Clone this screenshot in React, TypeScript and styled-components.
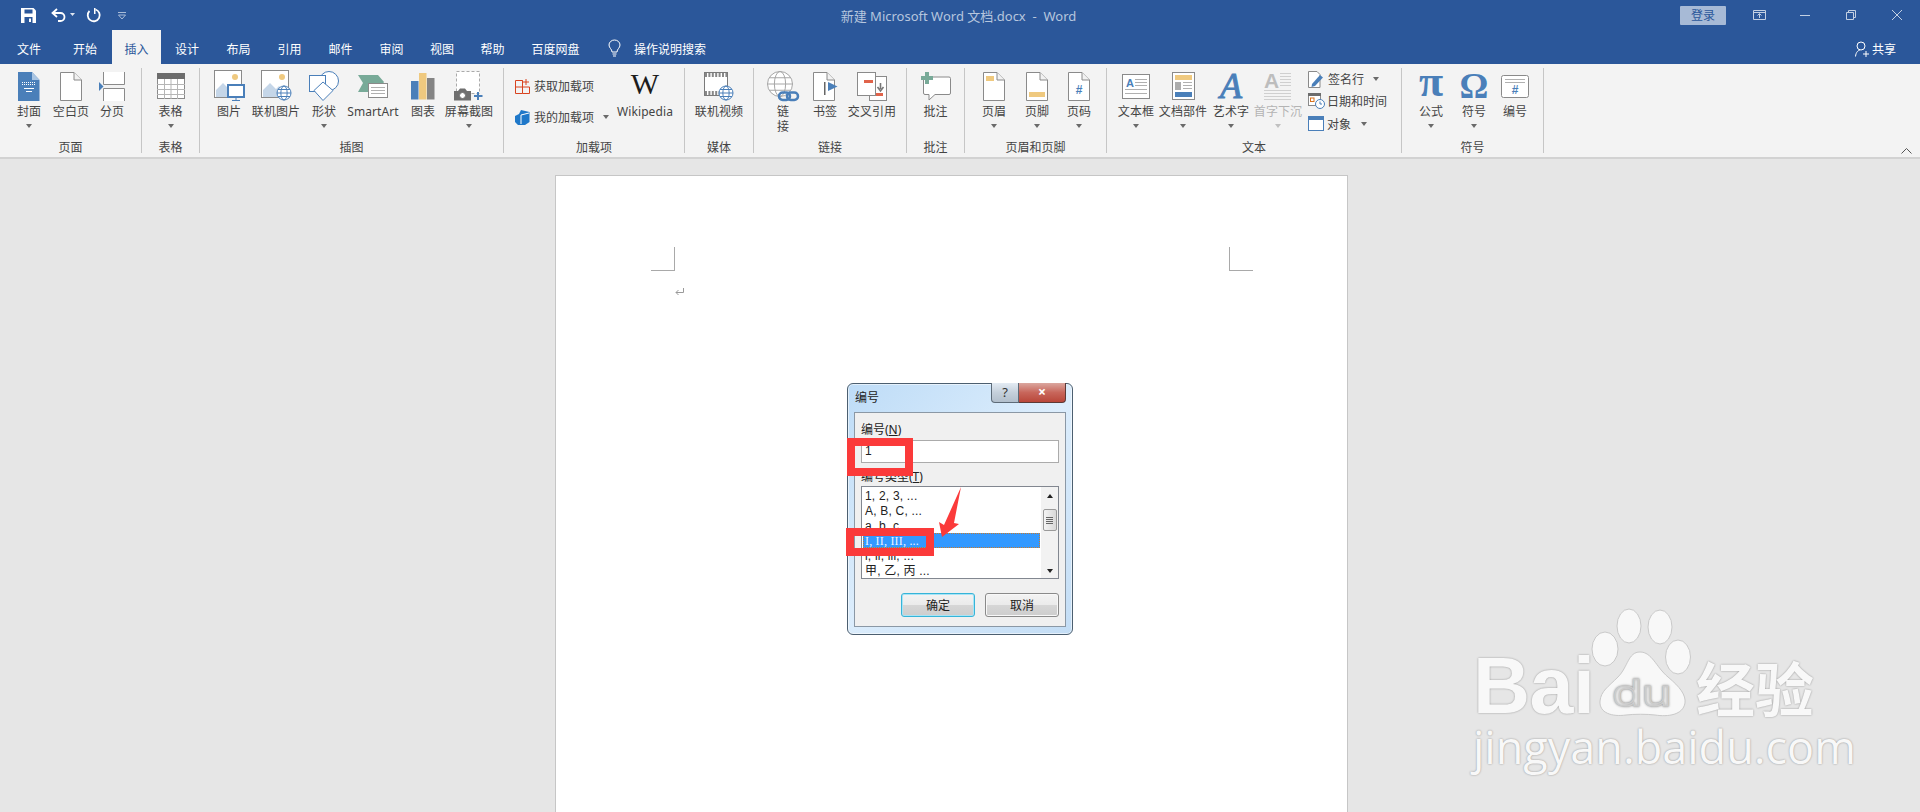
import React from 'react';
import styled, { createGlobalStyle } from 'styled-components';

const GlobalStyle = createGlobalStyle`
  html, body { margin: 0; padding: 0; background: #e6e6e6; }
  body { font-family: "Noto Sans", "Noto Sans CJK SC", sans-serif; font-size: 12px; color: #444; }
  * { box-sizing: border-box; }
  svg { overflow: visible; flex: none; }
`;

const Shell = styled.div`
  position: relative;
  width: 1920px;
  height: 812px;
  overflow: hidden;
  display: flex;
  flex-direction: column;
`;

/* title bar */
const Header = styled.header`
  background: #2b579a;
  height: 64px;
  flex: none;
  color: #fff;
`;
const TitleRow = styled.div`
  height: 30px;
  display: grid;
  grid-template-columns: 1fr auto 1fr;
  align-items: center;
`;
const Qat = styled.div`
  display: flex;
  align-items: center;
  padding-left: 21px;
`;
const QatIcon = styled.span<{ $w: number }>`
  display: flex;
  align-items: center;
  width: ${(p) => p.$w}px;
`;
const DocTitle = styled.div`
  color: #b6c6de;
  font-size: 13px;
  white-space: pre;
  padding-right: 3px;
`;
const WinControls = styled.div`
  display: flex;
  justify-content: flex-end;
  align-items: center;
`;
const Login = styled.div`
  width: 46px;
  height: 19px;
  margin-right: 10px;
  background: #a7bad6;
  border-radius: 1px;
  color: #2b579a;
  text-align: center;
  line-height: 19px;
`;
const WinButton = styled.span`
  width: 46px;
  height: 30px;
  display: flex;
  align-items: center;
  justify-content: center;
`;
const TabRow = styled.nav`
  height: 34px;
  display: flex;
  align-items: stretch;
`;
const Tab = styled.div<{ $w: number; $active?: boolean }>`
  width: ${(p) => p.$w}px;
  display: flex;
  align-items: center;
  justify-content: center;
  padding-top: 3px;
  background: ${(p) => (p.$active ? '#f3f3f3' : 'transparent')};
  color: ${(p) => (p.$active ? '#2b579a' : '#fff')};
`;
const Search = styled.div`
  display: flex;
  align-items: center;
  gap: 13px;
  margin-left: 15px;
  padding-top: 3px;
`;
const Share = styled.div`
  margin-left: auto;
  margin-right: 24px;
  display: flex;
  align-items: center;
  gap: 3px;
  padding-top: 3px;
`;

/* ribbon */
const Ribbon = styled.section`
  position: relative;
  height: 95px;
  flex: none;
  display: flex;
  padding-top: 4px;
  background: #f3f3f3;
  border-bottom: 2px solid #d2d2d2;
`;
const Group = styled.div<{ $w: number }>`
  width: ${(p) => p.$w}px;
  height: 85px;
  display: flex;
  flex-direction: column;
  border-right: 1px solid #c6c6c6;
`;
const GroupBody = styled.div<{ $pad?: number }>`
  flex: 1;
  display: flex;
  padding-left: ${(p) => p.$pad ?? 0}px;
`;
const GroupLabel = styled.div`
  height: 15px;
  line-height: 15px;
  margin-bottom: -2px;
  text-align: center;
  color: #444;
`;
const Tool = styled.div<{ $w: number; $off?: boolean }>`
  width: ${(p) => p.$w}px;
  display: flex;
  flex-direction: column;
  align-items: center;
  padding-top: 2px;
  color: ${(p) => (p.$off ? '#b4b4b4' : '#444')};
`;
const ToolIcon = styled.div`
  height: 32px;
  display: flex;
  align-items: center;
  justify-content: center;
`;
const ToolText = styled.div`
  line-height: 15px;
  margin-top: 2px;
  text-align: center;
  white-space: nowrap;
  letter-spacing: 0.1px;
`;
const Caret = styled.i<{ $light?: boolean }>`
  display: block;
  width: 0;
  height: 0;
  margin-top: 5px;
  border-left: 3.5px solid transparent;
  border-right: 3.5px solid transparent;
  border-top: 4px solid ${(p) => (p.$light ? '#c0c0c0' : '#6a6a6a')};
`;
const SmallCol = styled.div<{ $w: number; $top?: number }>`
  width: ${(p) => p.$w}px;
  padding-top: ${(p) => p.$top ?? 0}px;
  display: flex;
  flex-direction: column;
`;
const SmallRow = styled.div<{ $h: number; $gap: number; $indent: number }>`
  height: ${(p) => p.$h}px;
  display: flex;
  align-items: center;
  gap: ${(p) => p.$gap}px;
  padding-left: ${(p) => p.$indent}px;
  white-space: nowrap;
`;
const RowCaret = styled(Caret)<{ $ml: number }>`
  margin-top: 0;
  margin-left: ${(p) => p.$ml}px;
`;
const Collapse = styled.svg`
  position: absolute;
  right: 8px;
  bottom: 3px;
`;
const WikiW = styled.span`
  font-family: "Liberation Serif", serif;
  font-size: 30px;
  line-height: 26px;
  margin-bottom: 4px;
  color: #1c1c1c;
`;

/* document area */
const Workspace = styled.main`
  flex: 1;
  display: flex;
  justify-content: center;
  padding: 16px 18px 0 0;
  background: #e6e6e6;
`;
const Page = styled.div`
  width: 793px;
  background: #fff;
  border: 1px solid #c6c6c6;
  border-bottom: 0;
  padding: 71px 94px 0 95px;
`;
const CropRow = styled.div`
  display: flex;
  justify-content: space-between;
`;
const CropMark = styled.div<{ $side: 'left' | 'right' }>`
  width: 24px;
  height: 24px;
  border-bottom: 1px solid #a9a9a9;
  ${(p) => (p.$side === 'left' ? 'border-right' : 'border-left')}: 1px solid #a9a9a9;
`;
const ReturnMark = styled.svg`
  display: block;
  margin: 17px 0 0 24px;
`;

/* dialog */
const Dialog = styled.div`
  position: absolute;
  left: 847px;
  top: 383px;
  width: 226px;
  height: 252px;
  display: flex;
  flex-direction: column;
  border: 1px solid #4c5f70;
  border-radius: 6px;
  background: linear-gradient(135deg, #bedcf7 0%, #dcedfc 50%, #c3ddf5 100%);
  box-shadow: inset 0 0 0 1px rgba(255, 255, 255, 0.55);
`;
const DialogHead = styled.div`
  height: 28px;
  flex: none;
  display: flex;
  justify-content: space-between;
  padding: 0 6px 0 7px;
  color: #222;
`;
const DialogTitle = styled.div`
  padding-top: 6px;
  line-height: 16px;
`;
const CaptionGroup = styled.div`
  display: flex;
  height: 20px;
  margin-top: -1px;
`;
const HelpBtn = styled.div`
  width: 28px;
  text-align: center;
  font-size: 13px;
  line-height: 19px;
  color: #333;
  border: 1px solid #5d6b78;
  border-top: 0;
  border-radius: 0 0 0 4px;
  background: linear-gradient(180deg, #e3ebf3 0%, #c5d0db 50%, #b2bfcc 100%);
`;
const CloseBtn = styled.div`
  width: 47px;
  text-align: center;
  font-size: 14px;
  font-weight: 700;
  line-height: 18px;
  color: #fff;
  border: 1px solid #5d3a36;
  border-left: 0;
  border-top: 0;
  border-radius: 0 0 4px 0;
  background: linear-gradient(180deg, #dba79f 0%, #c8665b 50%, #b9473a 100%);
`;
const DialogPanel = styled.div`
  flex: 1;
  margin: 0 6px 7px;
  padding: 8px 6px 0;
  background: #f0f0f0;
  border: 1px solid #8b98a5;
  color: #222;
`;
const FieldLabel = styled.div`
  height: 16px;
  line-height: 18px;
`;
const Under = styled.span`
  text-decoration: underline;
`;
const ValueInput = styled.div`
  height: 23px;
  margin: 3px 0 5px;
  padding: 0 3px;
  line-height: 21px;
  background: #fff;
  border: 1px solid #ababab;
  font-family: "Liberation Sans", sans-serif;
  color: #222;
`;
const ListBox = styled.div`
  height: 93px;
  margin-top: 2px;
  display: flex;
  justify-content: space-between;
  background: #fff;
  border: 1px solid #828790;
`;
const ListItems = styled.div`
  width: 178px;
  padding: 1px 0 0 1px;
`;
const ListItem = styled.div<{ $sel?: boolean }>`
  height: 15px;
  line-height: 16px;
  padding-left: 2px;
  font-family: ${(p) => (p.$sel ? '"Liberation Serif", serif' : '"Liberation Sans", "Noto Sans CJK SC", sans-serif')};
  letter-spacing: 0.2px;
  color: ${(p) => (p.$sel ? '#eaf4ff' : '#222')};
  background: ${(p) => (p.$sel ? '#3399ff' : 'transparent')};
  outline: ${(p) => (p.$sel ? '1px dotted #c77b2f' : 'none')};
  outline-offset: -1px;
`;
const ScrollTrack = styled.div`
  width: 17px;
  display: flex;
  flex-direction: column;
  align-items: center;
  background: #f2f2f2;
`;
const ScrollThumb = styled.div`
  width: 14px;
  height: 22px;
  margin: 6px 0 auto;
  display: flex;
  flex-direction: column;
  justify-content: center;
  gap: 1px;
  align-items: center;
  border: 1px solid #9a9a9a;
  border-radius: 2px;
  background: linear-gradient(90deg, #f4f4f4, #d8d8d8);
`;
const ThumbLine = styled.i`
  display: block;
  width: 7px;
  height: 1px;
  background: #666;
`;
const ScrollArrow = styled.i<{ $up?: boolean }>`
  display: block;
  width: 0;
  height: 0;
  margin: 7px 0 5px;
  border-left: 3.5px solid transparent;
  border-right: 3.5px solid transparent;
  ${(p) => (p.$up ? 'border-bottom' : 'border-top')}: 4px solid #222;
`;
const DialogActions = styled.div`
  display: flex;
  justify-content: flex-end;
  gap: 10px;
  margin-top: 14px;
`;
const DialogButton = styled.div<{ $primary?: boolean }>`
  width: 74px;
  height: 24px;
  border-radius: 3px;
  text-align: center;
  line-height: 23px;
  font-size: 12px;
  color: #222;
  border: ${(p) => (p.$primary ? '1px solid #36b4d8' : '1px solid #8a8a8a')};
  box-shadow: ${(p) => (p.$primary ? 'inset 0 0 0 1px #a8e4f6' : 'inset 0 0 0 1px #f8f8f8')};
  background: linear-gradient(180deg, #f3f3f3 0%, #ebebeb 48%, #d6d6d6 52%, #cdcdcd 100%);
`;

/* annotations on top of the screenshot */
const RedBox = styled.div<{ $x: number; $y: number; $w: number; $h: number }>`
  position: absolute;
  left: ${(p) => p.$x}px;
  top: ${(p) => p.$y}px;
  width: ${(p) => p.$w}px;
  height: ${(p) => p.$h}px;
  border: 8px solid #fb3a3a;
`;
const RedArrow = styled.svg`
  position: absolute;
  left: 935px;
  top: 485px;
`;

/* watermark */
const Watermark = styled.div`
  position: absolute;
  left: 1473px;
  top: 605px;
  width: 350px;
  color: #f8f8f8;
  text-shadow: 0 0 2px rgba(0, 0, 0, 0.4);
`;
const MarkTop = styled.div`
  display: flex;
  align-items: flex-end;
  height: 115px;
`;
const MarkBai = styled.span`
  font-family: "Liberation Sans", sans-serif;
  font-weight: 700;
  font-size: 79px;
  line-height: 65px;
  width: 118px;
  margin-bottom: 2px;
  letter-spacing: -0.5px;
`;
const MarkCn = styled.span`
  font-family: "Noto Sans CJK SC", sans-serif;
  font-weight: 700;
  font-size: 59px;
  line-height: 59px;
  margin: 0 0 4px 1px;
  white-space: nowrap;
`;
const MarkUrl = styled.div`
  font-family: "Open Sans", sans-serif;
  font-weight: 400;
  font-size: 45px;
  line-height: 50px;
  margin-top: 2px;
  white-space: nowrap;
`;

/* icons */
const G = '#8a8a8a';
const BLUE = '#4a7fb9';
const YEL = '#efc97f';
const RED = '#e0634a';
const TEAL = '#78aa98';

const PAPER = 'M.5.5H14L21.5 8V28.5H.5Z';
const Sheet = ({ children }: { children?: React.ReactNode }) => (
  <svg width="22" height="29" viewBox="0 0 22 29">
    <path d={PAPER} fill="#fff" stroke={G} />
    <path d="M14 .5V8H21.5" fill="#f2f2f2" stroke={G} />
    {children}
  </svg>
);
const Globe = ({ x, y, r, c = BLUE }: { x: number; y: number; r: number; c?: string }) => (
  <g fill="#fff" stroke={c} strokeWidth="1">
    <circle cx={x} cy={y} r={r} />
    <ellipse cx={x} cy={y} rx={r * 0.45} ry={r} fill="none" />
    <path d={`M${x - r} ${y}H${x + r}M${x - r * 0.85} ${y - r * 0.5}H${x + r * 0.85}M${x - r * 0.85} ${y + r * 0.5}H${x + r * 0.85}`} fill="none" />
  </g>
);
const PhotoBase = () => (
  <>
    <rect x=".5" y=".5" width="27" height="27" fill="#fff" stroke={G} />
    <circle cx="21" cy="7" r="3" fill={YEL} />
    <path d="M2 27V20L9 13L15 19L18 16L27 25V27Z" fill="#c5d6e8" />
  </>
);
const SmallLines = ({ x, y, w, n, gap = 3, c = '#b0b0b0' }: { x: number; y: number; w: number; n: number; gap?: number; c?: string }) => (
  <path d={Array.from({ length: n }, (_, i) => `M${x} ${y + i * gap + 0.5}h${w}`).join('')} stroke={c} fill="none" />
);

const icons: Record<string, React.ReactNode> = {
  cover: (
    <svg width="22" height="29" viewBox="0 0 22 29">
      <path d="M0 0H14L21.5 8V29H0Z" fill={BLUE} />
      <path d="M14 0V8H21.5Z" fill="#a9c5e3" />
      <path d="M4 10.5h14M4 12.5h14" stroke="#fff" strokeDasharray="1 1" />
      <path d="M6 16.5h10M8 19.5h6" stroke="#fff" />
    </svg>
  ),
  blank: <Sheet />,
  pagebreak: (
    <svg width="26" height="29" viewBox="0 0 26 29">
      <path d="M4.5 0V12.5H25.5V0M4.5 29V16.5H25.5V29" fill="#fff" stroke={G} />
      <path d="M0 10L4.5 14.5L0 19Z" fill={BLUE} />
    </svg>
  ),
  table: (
    <svg width="28" height="26" viewBox="0 0 28 26">
      <rect x=".5" y=".5" width="27" height="25" fill="#fff" stroke={G} />
      <rect width="28" height="6" fill="#6c6c6c" />
      <path d="M0 11.5H28M0 16.5H28M0 21.5H28M7.5 6V26M14 6V26M20.5 6V26" stroke="#b5b5b5" />
    </svg>
  ),
  picture: (
    <svg width="31" height="32" viewBox="0 0 31 32">
      <PhotoBase />
      <rect x="14" y="15" width="16" height="12" fill="#fff" stroke={BLUE} strokeWidth="2" />
      <path d="M22 27V30M18 30.5H26" stroke={BLUE} />
    </svg>
  ),
  online: (
    <svg width="31" height="32" viewBox="0 0 31 32">
      <PhotoBase />
      <Globe x={23} y={23} r={7} />
    </svg>
  ),
  shapes: (
    <svg width="30" height="30" viewBox="0 0 30 30">
      <circle cx="20" cy="10" r="9.5" fill="#fff" stroke={BLUE} />
      <rect x=".5" y="4.5" width="16" height="16" fill="#fff" stroke={BLUE} />
      <path d="M14 11L24 19.5L14 29.5L5 19.5Z" fill="#fff" stroke={BLUE} />
    </svg>
  ),
  smartart: (
    <svg width="30" height="25" viewBox="0 0 30 25">
      <path d="M0 1H20L26 8L20 18H0L5 9Z" fill={TEAL} />
      <rect x="10.5" y="9.5" width="19" height="14" fill="#fff" stroke={G} />
      <SmallLines x={13} y={13} w={14} n={3} />
    </svg>
  ),
  chart: (
    <svg width="24" height="27" viewBox="0 0 24 27">
      <rect x="0" y="8" width="7.5" height="18.5" fill={BLUE} />
      <rect x="8" y="0" width="7.5" height="26.5" fill={YEL} />
      <rect x="16" y="5" width="7.5" height="21.5" fill="#848484" />
    </svg>
  ),
  screenshot: (
    <svg width="30" height="30" viewBox="0 0 30 30">
      <rect x="2.5" y=".5" width="23" height="22" fill="#fff" stroke="#aaa" strokeDasharray="3 2" />
      <path d="M0 20H4L6 17.5H11L13 20H17V29.5H0Z" fill="#6f6f6f" />
      <circle cx="8.5" cy="24.5" r="3" fill="#fff" stroke="#6f6f6f" />
      <path d="M24 21V29M20 25H28.5" stroke={BLUE} strokeWidth="2" />
    </svg>
  ),
  film: (
    <svg width="30" height="29" viewBox="0 0 30 29">
      <rect x=".5" y=".5" width="23" height="23" fill="#fff" stroke="#7a7a7a" />
      <path d="M1 3H23M1 21H23" stroke="#888" strokeWidth="4" strokeDasharray="2 1.4" />
      <Globe x={22} y={21} r={7} />
    </svg>
  ),
  link: (
    <svg width="32" height="31" viewBox="0 0 32 31">
      <Globe x={13} y={13} r={12.5} c="#a6a6a6" />
      <g fill="none" stroke={BLUE} strokeWidth="2.5">
        <rect x="12" y="21.5" width="11" height="7.5" rx="3.7" />
        <rect x="20" y="21.5" width="11" height="7.5" rx="3.7" />
      </g>
    </svg>
  ),
  bookmark: (
    <svg width="25" height="29" viewBox="0 0 25 29">
      <path d={PAPER} fill="#fff" stroke={G} />
      <path d="M14 .5V8H21.5" fill="#f2f2f2" stroke={G} />
      <rect x="11" y="10" width="1.5" height="13" fill="#666" />
      <path d="M15 10L24.5 14.5L15 19Z" fill={BLUE} />
    </svg>
  ),
  crossref: (
    <svg width="30" height="29" viewBox="0 0 30 29">
      <rect x="12.5" y="4.5" width="17" height="24" fill="#fff" stroke={G} />
      <rect x=".5" y=".5" width="18" height="23" fill="#fff" stroke={G} />
      <rect x="7" y="8" width="9" height="3" fill={RED} />
      <path d="M23.5 11V17M20.5 15L23.5 19L26.5 15" fill="none" stroke="#777" strokeWidth="1.6" />
      <rect x="19" y="21" width="7" height="3" fill={RED} />
    </svg>
  ),
  comment: (
    <svg width="30" height="29" viewBox="0 0 30 29">
      <path d="M4 5H28Q29.5 5 29.5 6.5V21Q29.5 22.5 28 22.5H14L8 28V22.5H4Q2.5 22.5 2.5 21V6.5Q2.5 5 4 5Z" fill="#fff" stroke={G} />
      <path d="M6 0V12M0 6H12" stroke={TEAL} strokeWidth="4" />
    </svg>
  ),
  header: (
    <Sheet>
      <rect x="3" y="4" width="8" height="5" fill={YEL} />
    </Sheet>
  ),
  footer: (
    <Sheet>
      <rect x="3" y="20" width="16" height="5" fill={YEL} />
    </Sheet>
  ),
  pagenum: (
    <Sheet>
      <text x="11" y="22" textAnchor="middle" fontFamily="Liberation Sans" fontWeight="700" fontSize="12" fill={BLUE}>#</text>
    </Sheet>
  ),
  textbox: (
    <svg width="28" height="25" viewBox="0 0 28 25">
      <rect x=".5" y=".5" width="27" height="24" fill="#fff" stroke={G} />
      <text x="4" y="13" fontFamily="Liberation Sans" fontWeight="700" fontSize="11" fill={BLUE}>A</text>
      <SmallLines x={13} y={5} w={12} n={3} />
      <SmallLines x={3} y={15} w={22} n={2} gap={4} />
    </svg>
  ),
  docpart: (
    <svg width="23" height="28" viewBox="0 0 23 28">
      <rect x=".5" y=".5" width="22" height="27" fill="#fff" stroke={G} />
      <rect x="3" y="3" width="17" height="5" fill={YEL} />
      <rect x="3" y="10" width="6" height="8" fill="#adadad" />
      <SmallLines x={11} y={10} w={9} n={3} />
      <rect x="3" y="20" width="17" height="5" fill={BLUE} />
    </svg>
  ),
  wordart: (
    <svg width="28" height="28" viewBox="0 0 28 28">
      <text x="14" y="26" textAnchor="middle" fontFamily="Liberation Serif" fontStyle="italic" fontSize="36" fill={BLUE} stroke={BLUE}>A</text>
    </svg>
  ),
  dropcap: (
    <svg width="28" height="28" viewBox="0 0 28 28">
      <text x="0" y="16" fontFamily="Liberation Sans" fontWeight="700" fontSize="21" fill="#bdbdbd">A</text>
      <SmallLines x={16} y={1} w={11} n={5} gap={3} c="#cfcfcf" />
      <SmallLines x={0} y={18} w={27} n={4} gap={3} c="#cfcfcf" />
    </svg>
  ),
  pi: (
    <svg width="28" height="28" viewBox="0 0 28 28">
      <text x="14" y="24" textAnchor="middle" fontFamily="Liberation Serif" fontWeight="700" fontSize="44" fill={BLUE}>π</text>
    </svg>
  ),
  omega: (
    <svg width="28" height="28" viewBox="0 0 28 28">
      <text x="14" y="26" textAnchor="middle" fontFamily="Liberation Serif" fontWeight="700" fontSize="36" fill={BLUE}>Ω</text>
    </svg>
  ),
  numbering: (
    <svg width="28" height="23" viewBox="0 0 28 23">
      <rect x=".5" y=".5" width="27" height="22" rx="2" fill="#fff" stroke={G} />
      <SmallLines x={4} y={4} w={20} n={2} />
      <text x="14" y="19" textAnchor="middle" fontFamily="Liberation Sans" fontWeight="700" fontSize="12" fill={BLUE}>#</text>
    </svg>
  ),
  addins: (
    <svg width="16" height="16" viewBox="0 0 16 16">
      <path d="M.5 2.5H7.5V15.5H.5ZM.5 9H14.5V15.5H7.5M7.5 9V2.5M11 1V7M8 4H14" fill="none" stroke="#d8431f" />
    </svg>
  ),
  myaddins: (
    <svg width="15" height="15" viewBox="0 0 15 15">
      <path d="M6 0L14.5 2V12L10 15H3L0 12V6L4 4Z" fill="#1f78c9" />
      <path d="M6 5V14M6 5L14 3" stroke="#fff" fill="none" />
    </svg>
  ),
  sign: (
    <svg width="17" height="17" viewBox="0 0 17 17">
      <path d="M.5 16.5V.5H9L12 3.5V16.5Z" fill="#fff" stroke={G} />
      <path d="M4 13L12 4L15 6.5L7 15L3.5 16Z" fill={BLUE} />
    </svg>
  ),
  datetime: (
    <svg width="17" height="16" viewBox="0 0 17 16">
      <rect x=".5" y=".5" width="12" height="12" fill="#fff" stroke={G} />
      <rect width="13" height="3" fill="#6c6c6c" />
      <rect x="2.5" y="5" width="3.5" height="3.5" fill="#fff" stroke="#d8731f" />
      <circle cx="12" cy="11" r="4.5" fill="#fff" stroke={BLUE} />
      <path d="M12 8.5V11H14" stroke={BLUE} fill="none" />
    </svg>
  ),
  object: (
    <svg width="16" height="15" viewBox="0 0 16 15">
      <rect x=".5" y=".5" width="15" height="14" fill="#fff" stroke={BLUE} />
      <rect width="16" height="4" fill={BLUE} />
    </svg>
  ),
};

type ToolDef = { w: number; label: string; icon?: React.ReactNode; caret?: boolean; off?: boolean };

const RibbonTool = ({ w, label, icon, caret, off }: ToolDef) => (
  <Tool $w={w} $off={off}>
    <ToolIcon>{icon}</ToolIcon>
    <ToolText>{label}</ToolText>
    {caret && <Caret $light={off} />}
  </Tool>
);

const tabs = [
  ['文件', 58],
  ['开始', 54],
  ['插入', 49],
  ['设计', 52],
  ['布局', 51],
  ['引用', 51],
  ['邮件', 51],
  ['审阅', 51],
  ['视图', 50],
  ['帮助', 51],
  ['百度网盘', 75],
] as const;

const numberFormats = ['1, 2, 3, ...', 'A, B, C, ...', 'a, b, c, ...', 'I, II, III, ...', 'i, ii, iii, ...', '甲, 乙, 丙 ...'];

export default function App() {
  return (
    <Shell>
      <GlobalStyle />
      <Header>
        <TitleRow>
          <Qat>
            <QatIcon $w={30}>
              <svg width="15" height="15" viewBox="0 0 15 15">
                <path d="M0 0H12.5L15 2.5V15H0Z" fill="#fff" />
                <rect x="3.5" y="1.5" width="8" height="4" fill="#2b579a" />
                <rect x="3.5" y="9" width="8" height="6" fill="#2b579a" />
                <rect x="8" y="10.5" width="2" height="3.5" fill="#fff" />
              </svg>
            </QatIcon>
            <QatIcon $w={35}>
              <svg width="24" height="14" viewBox="0 0 24 14">
                <path d="M6 1L1.5 5L6 9M2 5H9.5A4 4 0 0 1 9.5 13H7" fill="none" stroke="#fff" strokeWidth="1.8" />
                <path d="M19 5H24L21.5 8Z" fill="#dfe6f1" />
              </svg>
            </QatIcon>
            <QatIcon $w={32}>
              <svg width="15" height="15" viewBox="0 0 15 15">
                <path d="M9.5 1.5A6 6 0 1 1 3.5 3" fill="none" stroke="#fff" strokeWidth="1.8" />
                <path d="M9.5 0V6H8V0Z" fill="#fff" />
              </svg>
            </QatIcon>
            <QatIcon $w={10}>
              <svg width="8" height="8" viewBox="0 0 8 8">
                <path d="M0 1.5H8M.5 4H7.5L4 8Z" fill="none" stroke="#a9bcd8" />
              </svg>
            </QatIcon>
          </Qat>
          <DocTitle>新建 Microsoft Word 文档.docx  -  Word</DocTitle>
          <WinControls>
            <Login>登录</Login>
            <WinButton>
              <svg width="13" height="10" viewBox="0 0 13 10">
                <path d="M.5.5H12.5V9.5H.5ZM.5 2.5H12.5M6.5 8V4M4.5 5.5L6.5 3.5L8.5 5.5" fill="none" stroke="#c3d0e3" />
              </svg>
            </WinButton>
            <WinButton>
              <svg width="10" height="1" viewBox="0 0 10 1">
                <rect width="10" height="1" fill="#c3d0e3" />
              </svg>
            </WinButton>
            <WinButton>
              <svg width="10" height="10" viewBox="0 0 10 10">
                <path d="M.5 2.5H7.5V9.5H.5ZM2.5 2.5V.5H9.5V7.5H7.5" fill="none" stroke="#c3d0e3" />
              </svg>
            </WinButton>
            <WinButton>
              <svg width="10" height="10" viewBox="0 0 10 10">
                <path d="M0 0L10 10M10 0L0 10" stroke="#c3d0e3" />
              </svg>
            </WinButton>
          </WinControls>
        </TitleRow>
        <TabRow>
          {tabs.map(([label, w]) => (
            <Tab key={label} $w={w} $active={label === '插入'}>
              {label}
            </Tab>
          ))}
          <Search>
            <svg width="13" height="17" viewBox="0 0 13 17">
              <path d="M4 12C4 9 1 8 1 5A5.5 5 0 0 1 12 5C12 8 9 9 9 12ZM4.5 14H8.5M5 16H8" fill="none" stroke="#fff" />
            </svg>
            <span>操作说明搜索</span>
          </Search>
          <Share>
            <svg width="14" height="16" viewBox="0 0 14 16">
              <circle cx="6" cy="5" r="4" fill="none" stroke="#fff" />
              <path d="M.5 15.5C1 11 3 9.5 5 9M11 10V16M8 13H14" fill="none" stroke="#fff" />
            </svg>
            <span>共享</span>
          </Share>
        </TabRow>
      </Header>

      <Ribbon>
        <Group $w={142}>
          <GroupBody $pad={10}>
            <RibbonTool w={38} label="封面" icon={icons.cover} caret />
            <RibbonTool w={46} label="空白页" icon={icons.blank} />
            <RibbonTool w={36} label="分页" icon={icons.pagebreak} />
          </GroupBody>
          <GroupLabel>页面</GroupLabel>
        </Group>
        <Group $w={58}>
          <GroupBody>
            <RibbonTool w={57} label="表格" icon={icons.table} caret />
          </GroupBody>
          <GroupLabel>表格</GroupLabel>
        </Group>
        <Group $w={304}>
          <GroupBody $pad={10}>
            <RibbonTool w={38} label="图片" icon={icons.picture} />
            <RibbonTool w={56} label="联机图片" icon={icons.online} />
            <RibbonTool w={40} label="形状" icon={icons.shapes} caret />
            <RibbonTool w={58} label="SmartArt" icon={icons.smartart} />
            <RibbonTool w={42} label="图表" icon={icons.chart} />
            <RibbonTool w={50} label="屏幕截图" icon={icons.screenshot} caret />
          </GroupBody>
          <GroupLabel>插图</GroupLabel>
        </Group>
        <Group $w={181}>
          <GroupBody $pad={6}>
            <SmallCol $w={106} $top={3}>
              <SmallRow $h={30} $gap={3} $indent={5}>
                {icons.addins}
                <span>获取加载项</span>
              </SmallRow>
              <SmallRow $h={32} $gap={4} $indent={5}>
                {icons.myaddins}
                <span>我的加载项</span>
                <RowCaret $ml={5} />
              </SmallRow>
            </SmallCol>
            <RibbonTool w={58} label="Wikipedia" icon={<WikiW>W</WikiW>} />
          </GroupBody>
          <GroupLabel>加载项</GroupLabel>
        </Group>
        <Group $w={69}>
          <GroupBody>
            <RibbonTool w={68} label="联机视频" icon={icons.film} />
          </GroupBody>
          <GroupLabel>媒体</GroupLabel>
        </Group>
        <Group $w={153}>
          <GroupBody $pad={10}>
            <Tool $w={38}>
              <ToolIcon>{icons.link}</ToolIcon>
              <ToolText>
                链<br />接
              </ToolText>
            </Tool>
            <RibbonTool w={46} label="书签" icon={icons.bookmark} />
            <RibbonTool w={48} label="交叉引用" icon={icons.crossref} />
          </GroupBody>
          <GroupLabel>链接</GroupLabel>
        </Group>
        <Group $w={58}>
          <GroupBody>
            <RibbonTool w={57} label="批注" icon={icons.comment} />
          </GroupBody>
          <GroupLabel>批注</GroupLabel>
        </Group>
        <Group $w={142}>
          <GroupBody $pad={10}>
            <RibbonTool w={38} label="页眉" icon={icons.header} caret />
            <RibbonTool w={48} label="页脚" icon={icons.footer} caret />
            <RibbonTool w={36} label="页码" icon={icons.pagenum} caret />
          </GroupBody>
          <GroupLabel>页眉和页脚</GroupLabel>
        </Group>
        <Group $w={295}>
          <GroupBody $pad={10}>
            <RibbonTool w={38} label="文本框" icon={icons.textbox} caret />
            <RibbonTool w={56} label="文档部件" icon={icons.docpart} caret />
            <RibbonTool w={40} label="艺术字" icon={icons.wordart} caret />
            <RibbonTool w={54} label="首字下沉" icon={icons.dropcap} caret off />
            <SmallCol $w={90}>
              <SmallRow $h={22} $gap={3} $indent={3}>
                {icons.sign}
                <span>签名行</span>
                <RowCaret $ml={6} />
              </SmallRow>
              <SmallRow $h={22} $gap={2} $indent={3}>
                {icons.datetime}
                <span>日期和时间</span>
              </SmallRow>
              <SmallRow $h={23} $gap={3} $indent={3}>
                {icons.object}
                <span>对象</span>
                <RowCaret $ml={7} />
              </SmallRow>
            </SmallCol>
          </GroupBody>
          <GroupLabel>文本</GroupLabel>
        </Group>
        <Group $w={142}>
          <GroupBody $pad={10}>
            <RibbonTool w={38} label="公式" icon={icons.pi} caret />
            <RibbonTool w={48} label="符号" icon={icons.omega} caret />
            <RibbonTool w={34} label="编号" icon={icons.numbering} />
          </GroupBody>
          <GroupLabel>符号</GroupLabel>
        </Group>
        <Collapse width="11" height="6" viewBox="0 0 11 6">
          <path d="M.5 5.5L5.5.5L10.5 5.5" fill="none" stroke="#555" />
        </Collapse>
      </Ribbon>

      <Workspace>
        <Page>
          <CropRow>
            <CropMark $side="left" />
            <CropMark $side="right" />
          </CropRow>
          <ReturnMark width="9" height="8" viewBox="0 0 9 8">
            <path d="M8.5 0V4.5H1M3.5 2L1 4.5L3.5 7" fill="none" stroke="#9a9a9a" />
          </ReturnMark>
        </Page>
      </Workspace>

      <Dialog>
        <DialogHead>
          <DialogTitle>编号</DialogTitle>
          <CaptionGroup>
            <HelpBtn>?</HelpBtn>
            <CloseBtn>×</CloseBtn>
          </CaptionGroup>
        </DialogHead>
        <DialogPanel>
          <FieldLabel>
            编号(<Under>N</Under>)
          </FieldLabel>
          <ValueInput>1</ValueInput>
          <FieldLabel>
            编号类型(<Under>T</Under>)
          </FieldLabel>
          <ListBox>
            <ListItems>
              {numberFormats.map((f, i) => (
                <ListItem key={f} $sel={i === 3}>
                  {f}
                </ListItem>
              ))}
            </ListItems>
            <ScrollTrack>
              <ScrollArrow $up />
              <ScrollThumb>
                <ThumbLine />
                <ThumbLine />
                <ThumbLine />
                <ThumbLine />
              </ScrollThumb>
              <ScrollArrow />
            </ScrollTrack>
          </ListBox>
          <DialogActions>
            <DialogButton $primary>确定</DialogButton>
            <DialogButton>取消</DialogButton>
          </DialogActions>
        </DialogPanel>
      </Dialog>

      <RedBox $x={847} $y={438} $w={66} $h={38} />
      <RedBox $x={846} $y={528} $w={88} $h={28} />
      <RedArrow width="28" height="54" viewBox="0 0 28 54">
        <path d="M26 2L19 38L24 39L7 52L4 37L9 40Z" fill="#fb3a3a" />
      </RedArrow>

      <Watermark>
        <MarkTop>
          <MarkBai>Bai</MarkBai>
          <svg width="104" height="115" viewBox="0 0 104 115">
            <g fill="#f8f8f8" stroke="#c9c9c9">
              <ellipse cx="14" cy="44" rx="13" ry="17" />
              <ellipse cx="38" cy="21" rx="12" ry="17" />
              <ellipse cx="69" cy="22" rx="12" ry="17" />
              <ellipse cx="87" cy="52" rx="12.5" ry="17" />
              <path d="M49 47C61 47 65 62 77 72C89 82 95 90 94 98C92 110 77 112 64 110C56 109 43 109 35 110C21 112 8 108 9 96C10 86 17 82 27 72C37 62 37 47 49 47Z" />
            </g>
            <text x="51" y="101" textAnchor="middle" fontFamily="Liberation Sans" fontSize="36" textLength="59" lengthAdjust="spacingAndGlyphs" fill="#f4f4f4" stroke="#cdcdcd" strokeWidth="1">du</text>
          </svg>
          <MarkCn>经验</MarkCn>
        </MarkTop>
        <MarkUrl>jingyan.baidu.com</MarkUrl>
      </Watermark>
    </Shell>
  );
}
